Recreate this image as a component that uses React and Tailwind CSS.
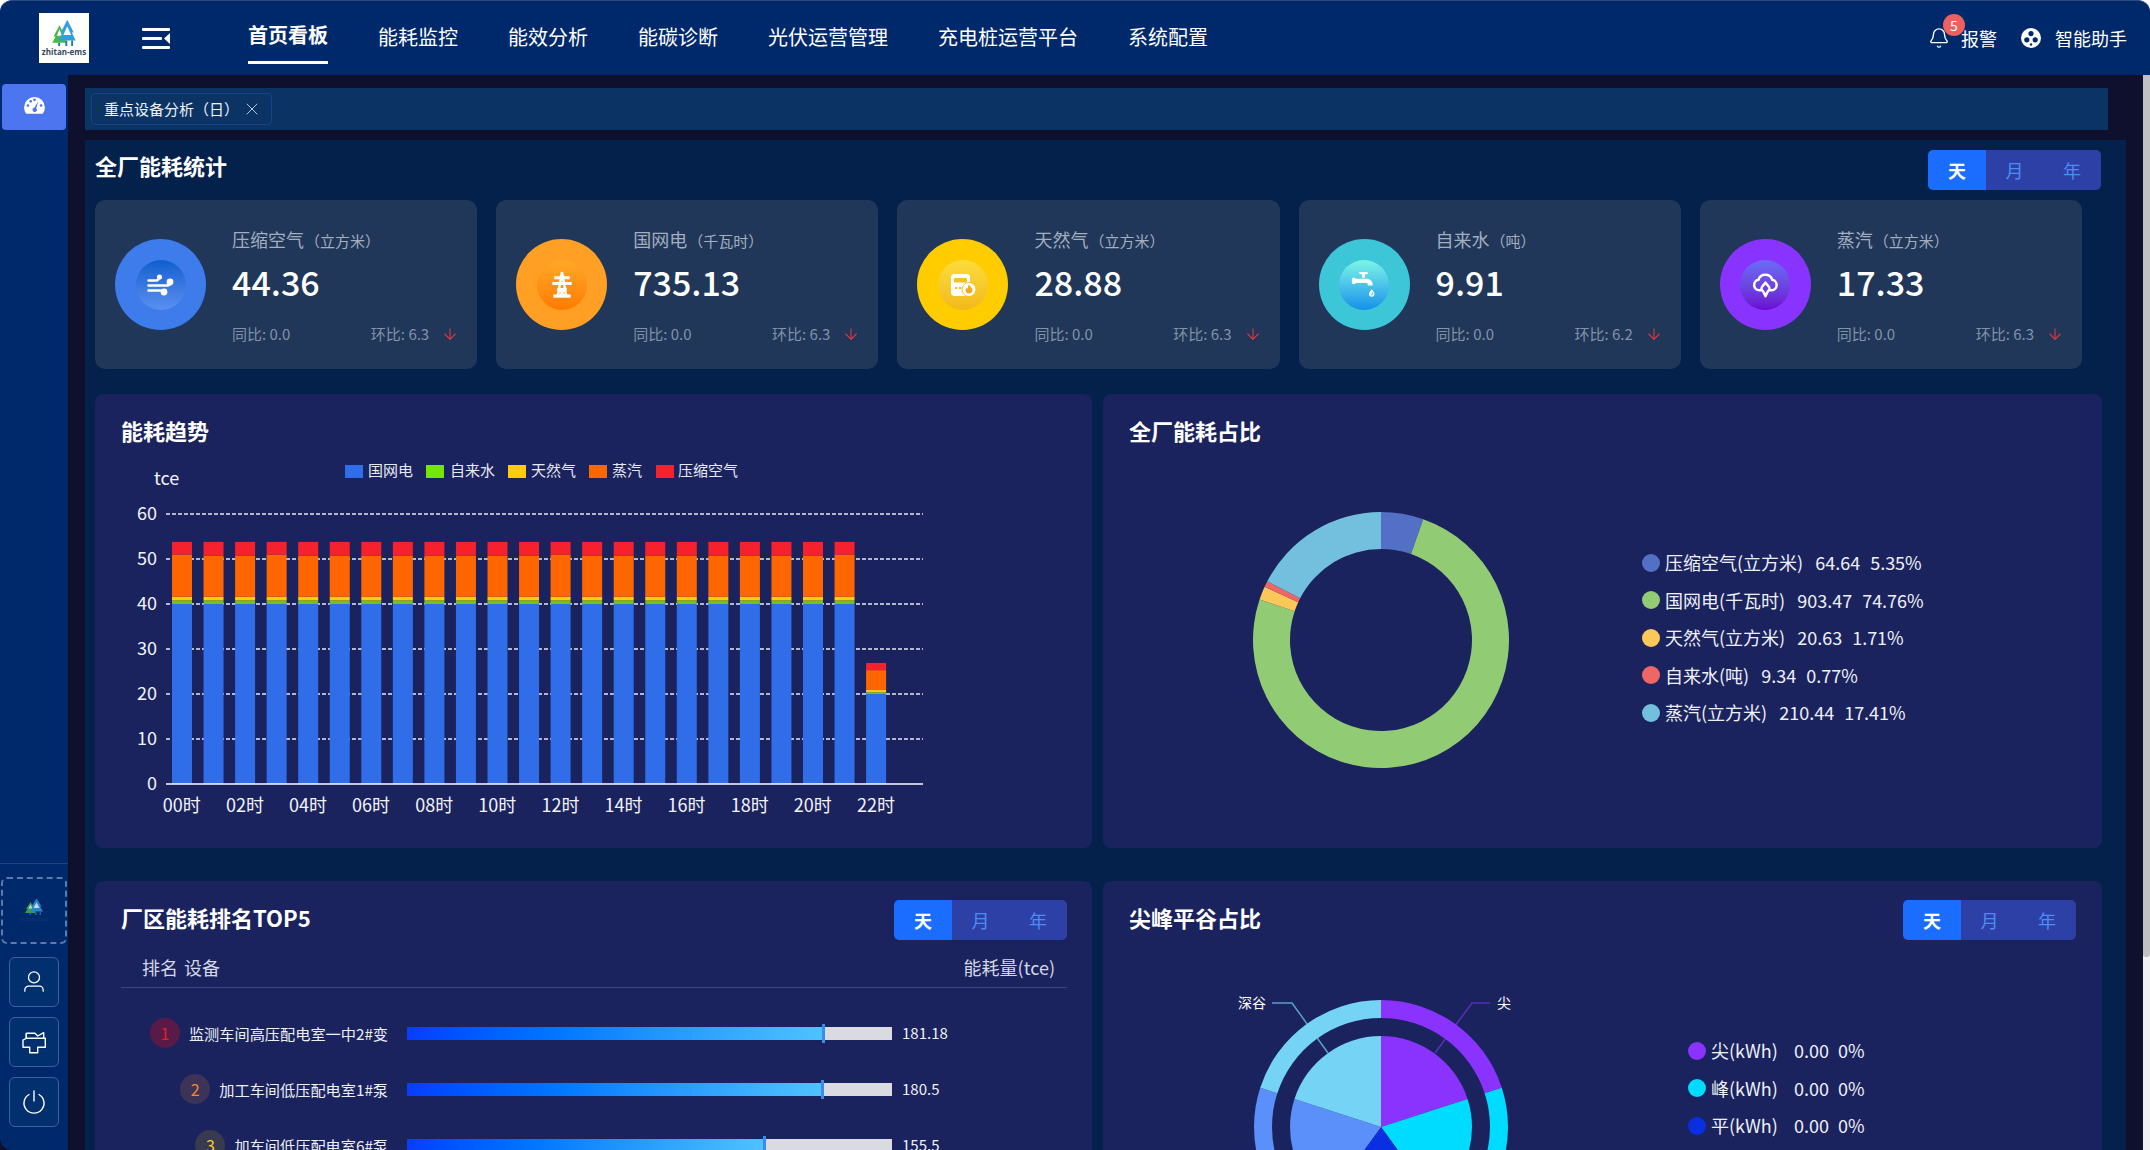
import React from 'react';
import { Bell, X, ArrowDown } from 'lucide-react';

const navItems = ['首页看板', '能耗监控', '能效分析', '能碳诊断', '光伏运营管理', '充电桩运营平台', '系统配置'];

const stats = [
  { name: '压缩空气', unit: '（立方米）', value: '44.36', hb: '6.3', outer: 'bg-[#3d7cea]', inner: 'from-[#0a5fd0] to-[#5a8ff0]', icon: 'wind' },
  { name: '国网电', unit: '（千瓦时）', value: '735.13', hb: '6.3', outer: 'bg-[#ff9f24]', inner: 'from-[#ffa826] to-[#ff7a00]', icon: 'tower' },
  { name: '天然气', unit: '（立方米）', value: '28.88', hb: '6.3', outer: 'bg-[#ffcc00]', inner: 'from-[#fcdc3c] to-[#f2b91a]', icon: 'gas' },
  { name: '自来水', unit: '（吨）', value: '9.91', hb: '6.2', outer: 'bg-[#3cc6d8]', inner: 'from-[#7df5e6] to-[#1490e8]', icon: 'water' },
  { name: '蒸汽', unit: '（立方米）', value: '17.33', hb: '6.3', outer: 'bg-[#8833ff]', inner: 'from-[#6a6cf5] to-[#6a05d0]', icon: 'steam' },
];

const share = [
  { label: '压缩空气(立方米)', val: '64.64', pct: '5.35%', p: 5.35, color: '#5470c6', dot: 'bg-[#5470c6]' },
  { label: '国网电(千瓦时)', val: '903.47', pct: '74.76%', p: 74.76, color: '#91cc75', dot: 'bg-[#91cc75]' },
  { label: '天然气(立方米)', val: '20.63', pct: '1.71%', p: 1.71, color: '#fac858', dot: 'bg-[#fac858]' },
  { label: '自来水(吨)', val: '9.34', pct: '0.77%', p: 0.77, color: '#ee6666', dot: 'bg-[#ee6666]' },
  { label: '蒸汽(立方米)', val: '210.44', pct: '17.41%', p: 17.41, color: '#73c0de', dot: 'bg-[#73c0de]' },
];

const ranks = [
  { no: 1, name: '监测车间高压配电室一中2#变', value: '181.18', fill: 'w-[418px]', badge: 'bg-[#5a1a48] text-[#e0202c]' },
  { no: 2, name: '加工车间低压配电室1#泵', value: '180.5', fill: 'w-[417px]', badge: 'bg-[#3d3358] text-[#f08a24]' },
  { no: 3, name: '加车间低压配电室6#泵', value: '155.5', fill: 'w-[359px]', badge: 'bg-[#383a50] text-[#f5d020]' },
];

const peaks = [
  { label: '尖(kWh)', dot: 'bg-[#8a33ff]' },
  { label: '峰(kWh)', dot: 'bg-[#00dcff]' },
  { label: '平(kWh)', dot: 'bg-[#0a2fe0]' },
];

const peakColors = ['#8a33ff', '#00dcff', '#0a2fe0', '#5b8ff9', '#75d3f5'];

// tall bars end around 53.8 with a slightly varying steam segment
const barTops = [51, 50.7, 50.7, 51, 50.7, 50.7, 50.7, 50.7, 50.7, 50.7, 50.7, 50.7, 51, 50.7, 50.7, 50.7, 50.7, 50.7, 50.7, 50.7, 50.7, 51];

function polar(cx, cy, r, deg) {
  const a = ((deg - 90) * Math.PI) / 180;
  return [cx + r * Math.cos(a), cy + r * Math.sin(a)];
}

function ringPath(cx, cy, r0, r1, from, to) {
  const [x1, y1] = polar(cx, cy, r1, from);
  const [x2, y2] = polar(cx, cy, r1, to);
  const large = to - from > 180 ? 1 : 0;
  if (r0 === 0) return `M${cx} ${cy}L${x1} ${y1}A${r1} ${r1} 0 ${large} 1 ${x2} ${y2}Z`;
  const [x3, y3] = polar(cx, cy, r0, to);
  const [x4, y4] = polar(cx, cy, r0, from);
  return `M${x1} ${y1}A${r1} ${r1} 0 ${large} 1 ${x2} ${y2}L${x3} ${y3}A${r0} ${r0} 0 ${large} 0 ${x4} ${y4}Z`;
}

const StatIcon = ({ type }) => {
  if (type === 'wind') {
    return (
      <svg viewBox="0 0 27 22" className="w-[27px] h-[22px]" fill="none" stroke="white" strokeWidth="2.4" strokeLinecap="round">
        <path d="M1.5 6.5H9c2 0 3-1.5 3-3.5" />
        <path d="M1.5 11.5H20c2 0 3-1.5 3-3" />
        <path d="M1.5 16.5H13c2 0 4 .5 4 2" />
        <circle cx="12.5" cy="3" r="2.6" fill="white" stroke="none" />
        <circle cx="23" cy="8" r="3.4" fill="white" stroke="none" />
        <circle cx="17" cy="18" r="3.4" fill="white" stroke="none" />
      </svg>
    );
  }
  if (type === 'tower') {
    return (
      <svg viewBox="0 0 24 28" className="w-[24px] h-[27px]" fill="none" stroke="white" strokeWidth="2.6">
        <path d="M12 1L7.5 27M12 1l4.5 26" />
        <path d="M4 7H20M2 13H22M7 19H17" strokeWidth="3" />
        <path d="M3 26H21" strokeWidth="3.4" />
        <path d="M9 19l6 7M15 19l-6 7" strokeWidth="2" />
      </svg>
    );
  }
  if (type === 'gas') {
    return (
      <svg viewBox="0 0 26 24" className="w-[26px] h-[24px]">
        <rect x="1" y="1" width="19" height="22" rx="3.5" fill="white" />
        <rect x="4" y="5" width="13" height="4.5" rx="1" fill="#f5c21a" />
        <path d="M5 15h2.4M9 15h2.4M13 15h2.4" stroke="#f5c21a" strokeWidth="2" />
        <circle cx="19" cy="16.5" r="7" fill="white" stroke="#f5c21a" strokeWidth="1" />
        <path d="M19 11.5c.6 2.2 3.4 2.8 3.4 5.6a3.4 3.4 0 0 1-6.8 0c0-1.2.6-2 1.2-2.6.2.8.6 1.2 1 1.2.4-1.2-.2-2.6 1.2-4.2Z" fill="#f5a81a" />
      </svg>
    );
  }
  if (type === 'water') {
    return (
      <svg viewBox="0 0 26 28" className="w-[26px] h-[27px]" fill="white">
        <rect x="8" y="1" width="9" height="2.4" rx="1" />
        <rect x="11" y="3" width="3" height="4" />
        <path d="M2 7h2v1h11c4.5 0 7 2.5 7 6v1h-5v-1c0-1-.6-1.6-2-1.6H4v1H2c-1 0-1.6-.6-1.6-1.4V8.4C.4 7.6 1 7 2 7Z" />
        <path d="M21 19c1.4 2 2.8 3.2 2.8 4.9a2.8 2.8 0 0 1-5.6 0c0-1.7 1.4-2.9 2.8-4.9Z" />
        <path d="M21.8 22.5a1.6 1.6 0 0 1-1.4 2.4" stroke="#1e9ae8" strokeWidth="1" fill="none" />
      </svg>
    );
  }
  return (
    <svg viewBox="0 0 28 28" className="w-[27px] h-[27px]" fill="none" stroke="white" strokeWidth="2.6" strokeLinejoin="round" strokeLinecap="round">
      <path d="M9 20H7.5a5.5 5.5 0 0 1-.8-10.9A7.5 7.5 0 0 1 21 9.1 5.5 5.5 0 0 1 20.5 20H19" />
      <path d="M14 12c-1 2-5 4-4 7 .5 1.5 2 2 2.5 4l1.5 3 1.5-3c.5-2 2-2.5 2.5-4 1-3-3-5-4-7Z" />
    </svg>
  );
};

const TreeLogo = ({ className }) => (
  <svg viewBox="0 0 40 34" preserveAspectRatio="none" className={className}>
    <path d="M13 8L4 22h3L2 30h22l-5-8h3Z" fill="#47b848" />
    <path d="M13 13l-4 8h8Z" fill="white" />
    <path d="M25 1L15 17h3L12 27h26l-6-10h3Z" fill="#2f9fe0" />
    <path d="M25 9l-6 11h12Z" fill="white" />
    <path d="M11 30h3v4h-3zM22 27h3v7h-3zM31 27h3v7h-3z" fill="#1f78b8" />
  </svg>
);

const Toggle = () => (
  <div className="flex h-10 rounded-[5px] overflow-hidden text-[18px] font-bold">
    <div className="w-[58px] flex items-center justify-center bg-[#1a6dff] text-white">天</div>
    <div className="w-[57px] flex items-center justify-center bg-[#2d40a5] text-[#4e8cf5] font-normal">月</div>
    <div className="w-[58px] flex items-center justify-center bg-[#2d40a5] text-[#4e8cf5] font-normal">年</div>
  </div>
);

const PanelHead = ({ title, toggle }) => (
  <div className="flex h-10 items-center justify-between">
    <h2 className="text-[22px] font-bold text-white pb-[5px]">{title}</h2>
    {toggle && <Toggle />}
  </div>
);

const StatCard = ({ item }) => (
  <div className="flex-1 h-[169px] rounded-[10px] bg-[#203759] flex items-center pl-5 pr-[18px]">
    <div className={`w-[91px] h-[91px] rounded-full flex items-center justify-center shrink-0 ${item.outer}`}>
      <div className={`w-[50px] h-[50px] rounded-full flex items-center justify-center bg-gradient-to-b ${item.inner}`}>
        <StatIcon type={item.icon} />
      </div>
    </div>
    <div className="ml-[26px] flex-1 flex flex-col">
      <div className="mt-[1px] text-[18px] leading-[26px] text-[#a3aebf]">
        {item.name}<span className="text-[15px] ml-[1px]">{item.unit}</span>
      </div>
      <div className="mt-[5px] text-[34px] leading-[46px] font-medium text-white">{item.value}</div>
      <div className="mt-[18px] flex items-center justify-between text-[15px] leading-[22px] text-[#8093a8]">
        <span>同比: 0.0</span>
        <span className="flex items-center">
          环比: {item.hb}
          <ArrowDown size={18} strokeWidth={1.5} className="ml-[12px] text-[#d9363e]" />
        </span>
      </div>
    </div>
  </div>
);

const TrendChart = () => {
  const y = (v) => 784 - v * 4.5;
  const band = 31.55;
  const legend = [
    { x: 345, tx: 368, c: '#2f6ee8', t: '国网电' },
    { x: 426, tx: 450, c: '#74e600', t: '自来水' },
    { x: 508, tx: 531, c: '#ffcc0d', t: '天然气' },
    { x: 589, tx: 612, c: '#ff6600', t: '蒸汽' },
    { x: 656, tx: 678, c: '#f5222d', t: '压缩空气' },
  ];
  return (
    <svg viewBox="95 453 997 395" className="w-[997px] h-[395px]">
      {legend.map((l) => (
        <g key={l.t}>
          <rect x={l.x} y={465} width={18} height={13} fill={l.c} />
          <text x={l.tx} y={476} fontSize="15" fill="#e6e8f2">{l.t}</text>
        </g>
      ))}
      <text x={154} y={485} fontSize="18" fill="#f2f3f8">tce</text>
      {[0, 10, 20, 30, 40, 50, 60].map((v) => (
        <g key={v}>
          <text x={157} y={y(v) + 6} fontSize="18" textAnchor="end" fill="#f2f3f8">{v}</text>
          {v > 0 && <line x1={166} x2={923} y1={y(v)} y2={y(v)} stroke="#e8eaf4" strokeWidth="1.4" strokeDasharray="4 2" />}
        </g>
      ))}
      {barTops.map((top, i) => {
        const x = 172 + i * band;
        return (
          <g key={i}>
            <rect x={x} y={y(40)} width={20} height={y(0) - y(40)} fill="#2f6ee8" />
            <rect x={x} y={y(40.8)} width={20} height={y(40) - y(40.8)} fill="#74c020" />
            <rect x={x} y={y(41.6)} width={20} height={y(40.8) - y(41.6)} fill="#ffcc0d" />
            <rect x={x} y={y(top)} width={20} height={y(41.6) - y(top)} fill="#ff6600" />
            <rect x={x} y={y(53.8)} width={20} height={y(top) - y(53.8)} fill="#f5222d" />
          </g>
        );
      })}
      <g>
        <rect x={172 + 22 * band} y={y(20)} width={20} height={y(0) - y(20)} fill="#2f6ee8" />
        <rect x={172 + 22 * band} y={y(20.4)} width={20} height={y(20) - y(20.4)} fill="#74c020" />
        <rect x={172 + 22 * band} y={y(20.9)} width={20} height={y(20.4) - y(20.9)} fill="#ffcc0d" />
        <rect x={172 + 22 * band} y={y(25.3)} width={20} height={y(20.9) - y(25.3)} fill="#ff6600" />
        <rect x={172 + 22 * band} y={y(26.9)} width={20} height={y(25.3) - y(26.9)} fill="#f5222d" />
      </g>
      <line x1={166} x2={923} y1={784} y2={784} stroke="#ffffff" strokeWidth="1.5" />
      {Array.from({ length: 12 }).map((_, i) => (
        <text key={i} x={181.8 + i * 2 * band} y={812} fontSize="18" textAnchor="middle" fill="#f2f3f8">
          {String(i * 2).padStart(2, '0')}时
        </text>
      ))}
    </svg>
  );
};

const ShareDonut = () => {
  let from = 0;
  return (
    <svg viewBox="1241 500 280 280" className="w-[280px] h-[280px] shrink-0">
      {share.map((s) => {
        const to = from + (s.p / 100) * 360;
        const d = ringPath(1381, 640, 91, 128, from, to);
        from = to;
        return <path key={s.label} d={d} fill={s.color} />;
      })}
    </svg>
  );
};

const PeakPie = () => (
  <svg viewBox="1220 940 300 300" className="w-[300px] h-[300px] shrink-0">
    <path d="M1435 1053L1472 1003H1490" fill="none" stroke="#5a2cb8" strokeWidth="1.5" />
    <path d="M1328 1053L1292 1003H1272" fill="none" stroke="#5aa0c8" strokeWidth="1.5" />
    {peakColors.map((c, i) => (
      <g key={c}>
        <path d={ringPath(1381, 1127, 109, 127, i * 72, (i + 1) * 72)} fill={c} />
        <path d={ringPath(1381, 1127, 0, 91, i * 72, (i + 1) * 72)} fill={c} />
      </g>
    ))}
    <text x={1497} y={1008} fontSize="14" fill="#ffffff">尖</text>
    <text x={1238} y={1008} fontSize="14" fill="#ffffff">深谷</text>
  </svg>
);

const RankRow = ({ row }) => (
  <div className="flex h-14 items-center">
    <div className="w-[267px] flex items-center justify-end">
      <span className={`w-[30px] h-[30px] rounded-full flex items-center justify-center text-[16px] mr-[9px] ${row.badge}`}>{row.no}</span>
      <span className="text-[15.2px] text-[#eef0f8] whitespace-nowrap">{row.name}</span>
    </div>
    <div className="ml-[19px] w-[485px] h-[13px] bg-[#d9dbe0] relative">
      <div className={`h-full bg-gradient-to-r from-[#0a3cff] to-[#4fc3ff] ${row.fill}`} />
      <div className={`absolute -top-[3px] h-[19px] left-0 ${row.fill} border-r-[3px] border-[#3d8be8]`} />
    </div>
    <span className="ml-[10px] text-[15px] text-[#eef0f8]">{row.value}</span>
  </div>
);

const App = () => (
  <div className="w-screen h-screen overflow-hidden flex flex-col bg-white font-['Noto_Sans_CJK_SC','Noto_Sans',sans-serif]">
    <header className="h-[75px] shrink-0 flex items-center bg-[#00296b] border-t border-[#2a4a86] rounded-tl-[12px] rounded-tr-[12px] text-white">
      <div className="ml-[39px] w-[50px] h-[50px] bg-white flex flex-col items-center justify-center">
        <TreeLogo className="w-[26px] h-[27px]" />
        <span className="text-[8px] leading-[11px] font-bold text-[#33475b] font-['Open_Sans',sans-serif]">zhitan-ems</span>
      </div>
      <svg viewBox="0 0 28 21" className="ml-[53px] w-[28px] h-[21px]" fill="white">
        <rect width="28" height="3" rx="1" />
        <rect y="9" width="20" height="3" rx="1" />
        <rect y="18" width="28" height="3" rx="1" />
        <path d="M28 5v11l-6-5.5Z" />
      </svg>
      <nav className="ml-[78px] flex gap-[50px] text-[20px] self-stretch">
        {navItems.map((n, i) => (
          <div key={n} className={`flex items-center h-[63px] pt-[8px] ${i === 0 ? 'font-bold border-b-[3px] border-white' : ''}`}>{n}</div>
        ))}
      </nav>
      <div className="ml-auto flex items-center pr-[23px] text-[18px]">
        <div className="relative flex items-center">
          <Bell size={22} strokeWidth={1.5} />
          <span className="absolute -top-[13px] left-[15px] w-[22px] h-[22px] rounded-full bg-[#ee5f5f] text-[14px] flex items-center justify-center">5</span>
        </div>
        <span className="ml-[11px]">报警</span>
        <svg viewBox="0 0 20 20" className="ml-[24px] w-5 h-5">
          <circle cx="10" cy="10" r="10" fill="white" />
          <circle cx="10" cy="5.6" r="2.6" fill="#00296b" />
          <circle cx="5.8" cy="11.8" r="2.6" fill="#00296b" />
          <circle cx="14.2" cy="11.8" r="2.6" fill="#00296b" />
          <circle cx="10" cy="16.5" r="1.2" fill="#00296b" />
        </svg>
        <span className="ml-[14px]">智能助手</span>
      </div>
    </header>

    <div className="flex-1 min-h-0 flex bg-[#0f0f2e]">
      <aside className="w-[68px] shrink-0 bg-[#00296b] rounded-bl-[12px] flex flex-col pt-[9px] pb-[23px]">
        <div className="mx-[2px] h-[46px] pb-[4px] rounded-[4px] bg-[#4e75f0] flex items-center justify-center">
          <svg viewBox="0 0 22 18" className="w-[21px] h-[17px]" fill="white">
            <path d="M11 0a11 11 0 0 0-11 11c0 2.6.9 5 2.4 6.8h17.2A10.9 10.9 0 0 0 22 11 11 11 0 0 0 11 0Z" />
            <circle cx="4" cy="9" r="1.4" fill="#4e75f0" />
            <circle cx="7" cy="4.6" r="1.4" fill="#4e75f0" />
            <circle cx="11" cy="3" r="1.4" fill="#4e75f0" />
            <circle cx="18" cy="9" r="1.4" fill="#4e75f0" />
            <path d="M15 4.5l-2.2 7.6a2.2 2.2 0 1 1-2-.6Z" fill="#4e75f0" />
          </svg>
        </div>
        <div className="mt-auto border-t border-[#1d4283] pt-[13px] flex flex-col items-center">
          <div className="w-[66px] h-[67px] border-2 border-dashed border-[#5f7aa8] rounded-[6px] flex flex-col items-center justify-center">
            <TreeLogo className="w-[20px] h-[17px] opacity-80" />
            <span className="text-[5px] leading-[8px] text-[#123a70]">zhitancloud</span>
          </div>
          <div className="mt-[13px] flex flex-col gap-[10px]">
            <button className="w-[50px] h-[50px] rounded-[6px] border border-[#3f5f9f] bg-[#02306f] flex items-center justify-center">
              <svg viewBox="0 0 24 24" className="w-[22px] h-[22px]" fill="none" stroke="white" strokeWidth="1.4" strokeLinecap="round">
                <circle cx="12" cy="7" r="6" />
                <path d="M2 22v-1.5a4 4 0 0 1 4-4h12a4 4 0 0 1 4 4V22" />
              </svg>
            </button>
            <button className="w-[50px] h-[50px] rounded-[6px] border border-[#3f5f9f] bg-[#02306f] flex items-center justify-center">
              <svg viewBox="0 0 24 24" className="w-[24px] h-[24px]" fill="none" stroke="white" strokeWidth="1.4" strokeLinejoin="round">
                <path d="M4.3 3.3H13L15.7 6L21.7 2.7V8.3H23.3V17.3H15.7V22.7H7.7V17.3H1V10L4.3 8.3Z" />
                <path d="M4.3 3.3V8.3H21.7" />
              </svg>
            </button>
            <button className="w-[50px] h-[50px] rounded-[6px] border border-[#3f5f9f] bg-[#02306f] flex items-center justify-center">
              <svg viewBox="0 0 24 24" className="w-[24px] h-[26px]" fill="none" stroke="white" strokeWidth="1.4" strokeLinecap="round">
                <path d="M12 1v10" />
                <path d="M7 4.5a10 10 0 1 0 10 0" />
              </svg>
            </button>
          </div>
        </div>
      </aside>

      <main className="flex-1 min-w-0 overflow-hidden ml-[17px] pt-[13px] flex flex-col">
        <div className="h-[42px] mr-[35px] shrink-0 bg-[#0b3464] flex items-center pl-[6px]">
          <div className="h-8 w-[181px] rounded-[4px] border border-[#12458a] flex items-center pl-[12px] text-[15px] text-[#eef2fa]">
            重点设备分析（日）
            <X size={20} strokeWidth={1.1} className="ml-[3px] text-[#c6d2e4]" />
          </div>
        </div>
        <div className="mt-[10px] mr-[17px] flex-1 bg-[#03214b] pl-[10px] pr-[25px]">
          <div className="h-[60px] flex items-center justify-between">
            <h1 className="text-[22px] font-bold text-white pb-[10px]">全厂能耗统计</h1>
            <Toggle />
          </div>
          <div className="flex gap-[19px] pr-[19px]">
            {stats.map((s) => <StatCard key={s.name} item={s} />)}
          </div>

          <div className="mt-[25px] grid grid-cols-[997px_999px] gap-x-[11px] gap-y-[33px]">
            <section className="h-[454px] rounded-[8px] bg-[#1b235e] pt-[19px] flex flex-col">
              <div className="px-[26px]"><PanelHead title="能耗趋势" /></div>
              <TrendChart />
            </section>

            <section className="h-[454px] rounded-[8px] bg-[#1b235e] pt-[19px] flex flex-col">
              <div className="px-[26px]"><PanelHead title="全厂能耗占比" /></div>
              <div className="flex items-center mt-[47px] pl-[138px]">
                <ShareDonut />
                <div className="ml-[121px] mb-[5px] flex flex-col text-[18px] text-[#eef0f8]">
                  {share.map((s) => (
                    <div key={s.label} className="h-[37.5px] flex items-center whitespace-nowrap">
                      <span className={`w-[18px] h-[18px] rounded-full ${s.dot}`} />
                      <span className="ml-[5px]">{s.label}</span>
                      <span className="ml-3">{s.val}</span>
                      <span className="ml-[10px]">{s.pct}</span>
                    </div>
                  ))}
                </div>
              </div>
            </section>

            <section className="h-[454px] rounded-[8px] bg-[#1b235e] pt-[19px] pl-[26px] pr-[25px]">
              <PanelHead title="厂区能耗排名TOP5" toggle />
              <div className="h-[48px] pt-[8px] flex items-center justify-between border-b border-[#3d4680] pl-[21px] pr-[12px] text-[18px] text-[#d3d7e6]">
                <span>排名<span className="ml-[6px]">设备</span></span>
                <span>能耗量(tce)</span>
              </div>
              <div className="mt-[17px] -ml-[26px] pl-[26px]">
                {ranks.map((r) => <RankRow key={r.no} row={r} />)}
              </div>
            </section>

            <section className="h-[454px] rounded-[8px] bg-[#1b235e] pt-[19px]">
              <div className="pl-[26px] pr-[26px]"><PanelHead title="尖峰平谷占比" toggle /></div>
              <div className="flex pl-[117px]">
                <PeakPie />
                <div className="ml-[168px] mt-[92px] flex flex-col text-[18px] text-[#eef0f8]">
                  {peaks.map((p) => (
                    <div key={p.label} className="h-[37.5px] flex items-center whitespace-nowrap">
                      <span className={`w-[18px] h-[18px] rounded-full ${p.dot}`} />
                      <span className="ml-[5px] w-[83px]">{p.label}</span>
                      <span>0.00</span>
                      <span className="ml-[9px]">0%</span>
                    </div>
                  ))}
                </div>
              </div>
            </section>
          </div>
        </div>
      </main>
      <div className="w-[7px] shrink-0 bg-[#f1f1f1]">
        <div className="h-[882px] rounded-b-[3px] bg-[#c1c1c1]" />
      </div>
    </div>
  </div>
);

export default App;
